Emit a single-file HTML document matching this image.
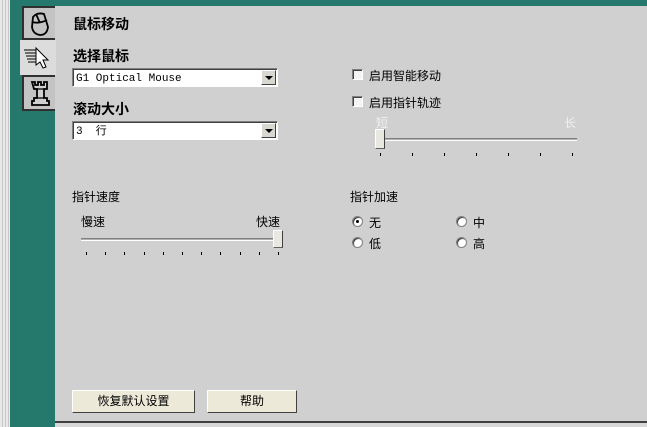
<!DOCTYPE html>
<html><head><meta charset="utf-8"><style>
*{margin:0;padding:0;box-sizing:border-box}
body{width:647px;height:427px;position:relative;overflow:hidden;background:#d4d4d4;font-family:"Liberation Sans","Noto Sans CJK SC","WenQuanYi Zen Hei",sans-serif;font-size:12px;color:#000}
.a{position:absolute}
.teal{background:#24786c}
.panel{left:55px;top:6px;width:592px;height:416px;background:#d0d0d0}
.tab{left:22px;width:33px;background:#c4c4c4;border:2px solid #303030;border-right:none}
.h{font-weight:bold;font-size:14px}
.sel{height:19px;background:#fff;border:1px solid #808080;border-right-color:#fff;border-bottom-color:#fff;box-shadow:inset 1px 1px 0 #404040;font-family:"Liberation Mono","Noto Sans CJK SC",monospace;font-size:11px;padding:3px 3px 0;line-height:14px}
.arr{position:absolute;right:1px;top:1px;width:15px;height:15px;background:#d8d8d0;border:1px solid;border-color:#fff #404040 #404040 #fff}
.arr:after{content:"";position:absolute;left:3px;top:5px;border:4px solid transparent;border-top:4px solid #000;border-bottom:none}
.cb{width:11px;height:11px;background:#f4f4f4;border:1px solid;border-color:#808080 #fff #fff #808080;box-shadow:inset 1px 1px 0 #404040}
.rd{width:11px;height:11px;border-radius:50%;background:#fff;border:1px solid #808080;box-shadow:inset 1px 1px 0 #404040}
.track{height:3px;border-top:1px solid #808080;border-bottom:1px solid #fff;background:#b0b0b0}
.tick{width:1px;height:3px;background:#000}
.btn{height:23px;background:#ece9d8;border:1px solid;border-color:#fff #404040 #404040 #fff;text-align:center;line-height:20px;font-size:12px}
.thumb{width:10px;height:18px;background:#e8e8e0;border:1px solid;border-color:#fff #404040 #606060 #fff}
</style></head><body>
<div class="a" style="left:0;top:0;width:10px;height:427px;background:repeating-linear-gradient(90deg,#e8e8e8 0 2px,#c8c8c8 2px 3px)"></div>
<div class="a teal" style="left:10px;top:0;width:45px;height:427px"></div>
<div class="a teal" style="left:10px;top:0;width:637px;height:6px"></div>
<div class="a panel"></div>
<div class="a" style="left:55px;top:421px;width:592px;height:2px;background:#404040"></div>
<div class="a" style="left:55px;top:423px;width:592px;height:4px;background:#d8d8d8"></div>

<div class="a tab" style="top:6px;height:34px"><svg width="31" height="30"><path d="M9 9 Q13 4 20 6 L24 19 Q23 27 16 27 Q9 26 8 19 Z M12 6 L16 15 M8 14 Q15 16 23 12" fill="none" stroke="#000" stroke-width="1.8"/></svg></div>
<div class="a" style="left:20px;top:40px;width:36px;height:35px;background:#dcdcdc"><svg width="36" height="35"><path d="M4 10h12M5 13h12M6 16h12M7 19h12M8 22h10" stroke="#000"/><path d="M16 8 L28 20 L23 20 L26 27 L23 28 L20 22 L16 25 Z" fill="#fff" stroke="#000"/></svg></div>
<div class="a tab" style="top:75px;height:36px"><svg width="31" height="32"><path d="M8 5h3v3h3v-3h3v3h3v-3h3v7h-3v9h3v3h2v4h-17v-4h2v-3h3v-9h-3z" fill="#d0d0d0" stroke="#000" stroke-width="1.8"/><path d="M11 12h9M11 21h9" stroke="#000" stroke-width="1.3"/></svg></div>

<div class="a h" style="left:73px;top:14px">鼠标移动</div>
<div class="a h" style="left:73px;top:46px">选择鼠标</div>
<div class="a sel" style="left:72px;top:68px;width:206px">G1 Optical Mouse<div class="arr"></div></div>
<div class="a h" style="left:73px;top:99px">滚动大小</div>
<div class="a sel" style="left:72px;top:121px;width:206px">3 &nbsp;行<div class="arr"></div></div>

<div class="a cb" style="left:352px;top:69px"></div>
<div class="a" style="left:369px;top:67px">启用智能移动</div>
<div class="a cb" style="left:352px;top:96px"></div>
<div class="a" style="left:369px;top:94px">启用指针轨迹</div>
<div class="a" style="left:376px;top:114px;color:#f0f0f0">短</div>
<div class="a" style="left:564px;top:114px;color:#f0f0f0">长</div>
<div class="a track" style="left:378px;top:138px;width:199px"></div>
<div class="a thumb" style="left:375px;top:129px;height:20px"></div>
<div class="a" style="left:380px;top:153px;width:200px;height:3px">
<div class="a tick" style="left:0"></div><div class="a tick" style="left:32px"></div><div class="a tick" style="left:64px"></div><div class="a tick" style="left:96px"></div><div class="a tick" style="left:128px"></div><div class="a tick" style="left:160px"></div><div class="a tick" style="left:192px"></div></div>

<div class="a" style="left:72px;top:188px">指针速度</div>
<div class="a" style="left:81px;top:213px">慢速</div>
<div class="a" style="left:256px;top:213px">快速</div>
<div class="a track" style="left:81px;top:238px;width:198px"></div>
<div class="a thumb" style="left:273px;top:230px"></div>
<div class="a" style="left:86px;top:252px;width:200px;height:3px">
<div class="a tick" style="left:0"></div><div class="a tick" style="left:19px"></div><div class="a tick" style="left:38px"></div><div class="a tick" style="left:58px"></div><div class="a tick" style="left:77px"></div><div class="a tick" style="left:96px"></div><div class="a tick" style="left:115px"></div><div class="a tick" style="left:134px"></div><div class="a tick" style="left:154px"></div><div class="a tick" style="left:173px"></div><div class="a tick" style="left:192px"></div></div>

<div class="a" style="left:350px;top:188px">指针加速</div>
<div class="a rd" style="left:352px;top:216px"><div class="a" style="left:3px;top:3px;width:3px;height:3px;background:#000;border-radius:50%"></div></div>
<div class="a" style="left:369px;top:214px">无</div>
<div class="a rd" style="left:352px;top:237px"></div>
<div class="a" style="left:369px;top:235px">低</div>
<div class="a rd" style="left:456px;top:216px"></div>
<div class="a" style="left:473px;top:214px">中</div>
<div class="a rd" style="left:456px;top:237px"></div>
<div class="a" style="left:473px;top:235px">高</div>

<div class="a btn" style="left:72px;top:390px;width:123px">恢复默认设置</div>
<div class="a btn" style="left:207px;top:390px;width:90px">帮助</div>
</body></html>
